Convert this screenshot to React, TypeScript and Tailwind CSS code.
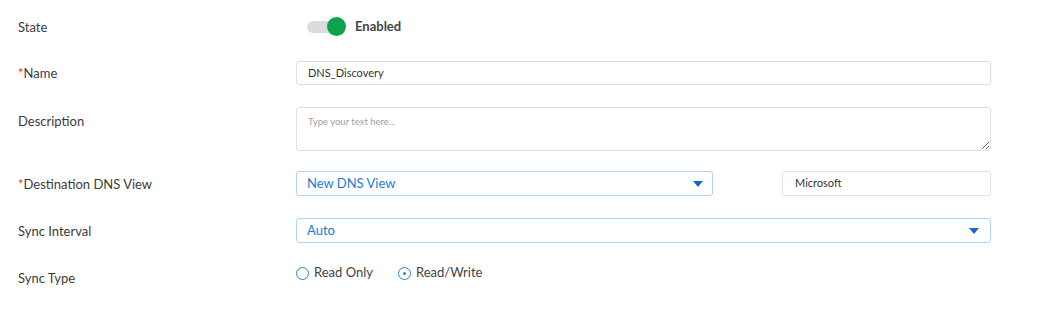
import React from "react";

const Caret = () => (
  <svg width="10" height="6" viewBox="0 0 10 6" className="shrink-0">
    <path d="M0 0 H10 L5 6 Z" fill="#1668c4" />
  </svg>
);

const Label = ({ children, req, className = "" }: { children: React.ReactNode; req?: boolean; className?: string }) => (
  <div className={`w-[296px] shrink-0 pl-[18px] text-[13px] leading-[16px] text-[#3b3b3b] ${className}`}>
    {req && <span className="text-[#e0382f]">*</span>}
    {children}
  </div>
);

export default function App() {
  return (
    <div className="w-[1047px] h-[320px] bg-white pt-[12px] text-[#333]" style={{ fontFamily: "Lato, 'Open Sans', sans-serif" }}>
      {/* State */}
      <div className="flex items-center h-[30px]">
        <Label>State</Label>
        <div className="flex items-center">
          <div className="relative w-[40px] h-[18px] ml-[11px] flex items-center">
            <div className="w-[34px] h-[12px] rounded-full bg-[#dcdcdc]" />
            <div className="absolute left-[20px] top-[-1px] w-[19px] h-[19px] rounded-full bg-[#0fa24e]" />
          </div>
          <span className="ml-[8px] text-[13px] font-bold text-[#444]">Enabled</span>
        </div>
      </div>

      {/* Name */}
      <div className="flex items-center h-[24px] mt-[19px]">
        <Label req>Name</Label>
        <div className="w-[695px] h-[24px] border border-[#dedede] rounded-[3px] shadow-[0_0_2px_rgba(0,0,0,0.06)] flex items-center pl-[11px] text-[11px] text-[#333]">
          DNS_Discovery
        </div>
      </div>

      {/* Description */}
      <div className="flex items-start h-[44px] mt-[22px]">
        <Label className="pt-[6px]">Description</Label>
        <textarea
          className="w-[695px] h-[44px] border border-[#dedede] rounded-[3px] resize-y px-[11px] pt-[7px] text-[9.5px] leading-[14px] outline-none placeholder:text-[#a0a0a0]"
          placeholder="Type your text here..."
        />
      </div>

      {/* Destination DNS View */}
      <div className="flex items-center h-[25px] mt-[20px]">
        <Label req>Destination DNS View</Label>
        <div className="w-[417px] h-[25px] border border-[#aed5f5] rounded-[3px] flex items-center justify-between pl-[10px] pr-[9px]">
          <span className="text-[13px] text-[#1a7bd6]">New DNS View</span>
          <Caret />
        </div>
        <div className="ml-[69px] w-[209px] h-[25px] border border-[#e2e2e2] rounded-[3px] shadow-[0_0_2px_rgba(0,0,0,0.06)] flex items-center pl-[12px] text-[11px] text-[#333]">
          Microsoft
        </div>
      </div>

      {/* Sync Interval */}
      <div className="flex items-center h-[25px] mt-[22px]">
        <Label>Sync Interval</Label>
        <div className="w-[695px] h-[25px] border border-[#aed5f5] rounded-[3px] flex items-center justify-between pl-[10px] pr-[11px]">
          <span className="text-[13px] text-[#1a7bd6]">Auto</span>
          <Caret />
        </div>
      </div>

      {/* Sync Type */}
      <div className="flex items-start h-[20px] mt-[20px]">
        <Label className="mt-[7px]">Sync Type</Label>
        <div className="flex items-center h-[20px] text-[13px] text-[#444]">
          <span className="w-[13px] h-[13px] rounded-full border border-[#2f7fcf] bg-white" />
          <span className="ml-[5px]">Read Only</span>
          <span className="ml-[25px] w-[13px] h-[13px] rounded-full border border-[#2f7fcf] bg-white flex items-center justify-center">
            <span className="w-[3px] h-[3px] rounded-full bg-[#2f7fcf]" />
          </span>
          <span className="ml-[5px]">Read/Write</span>
        </div>
      </div>
    </div>
  );
}
